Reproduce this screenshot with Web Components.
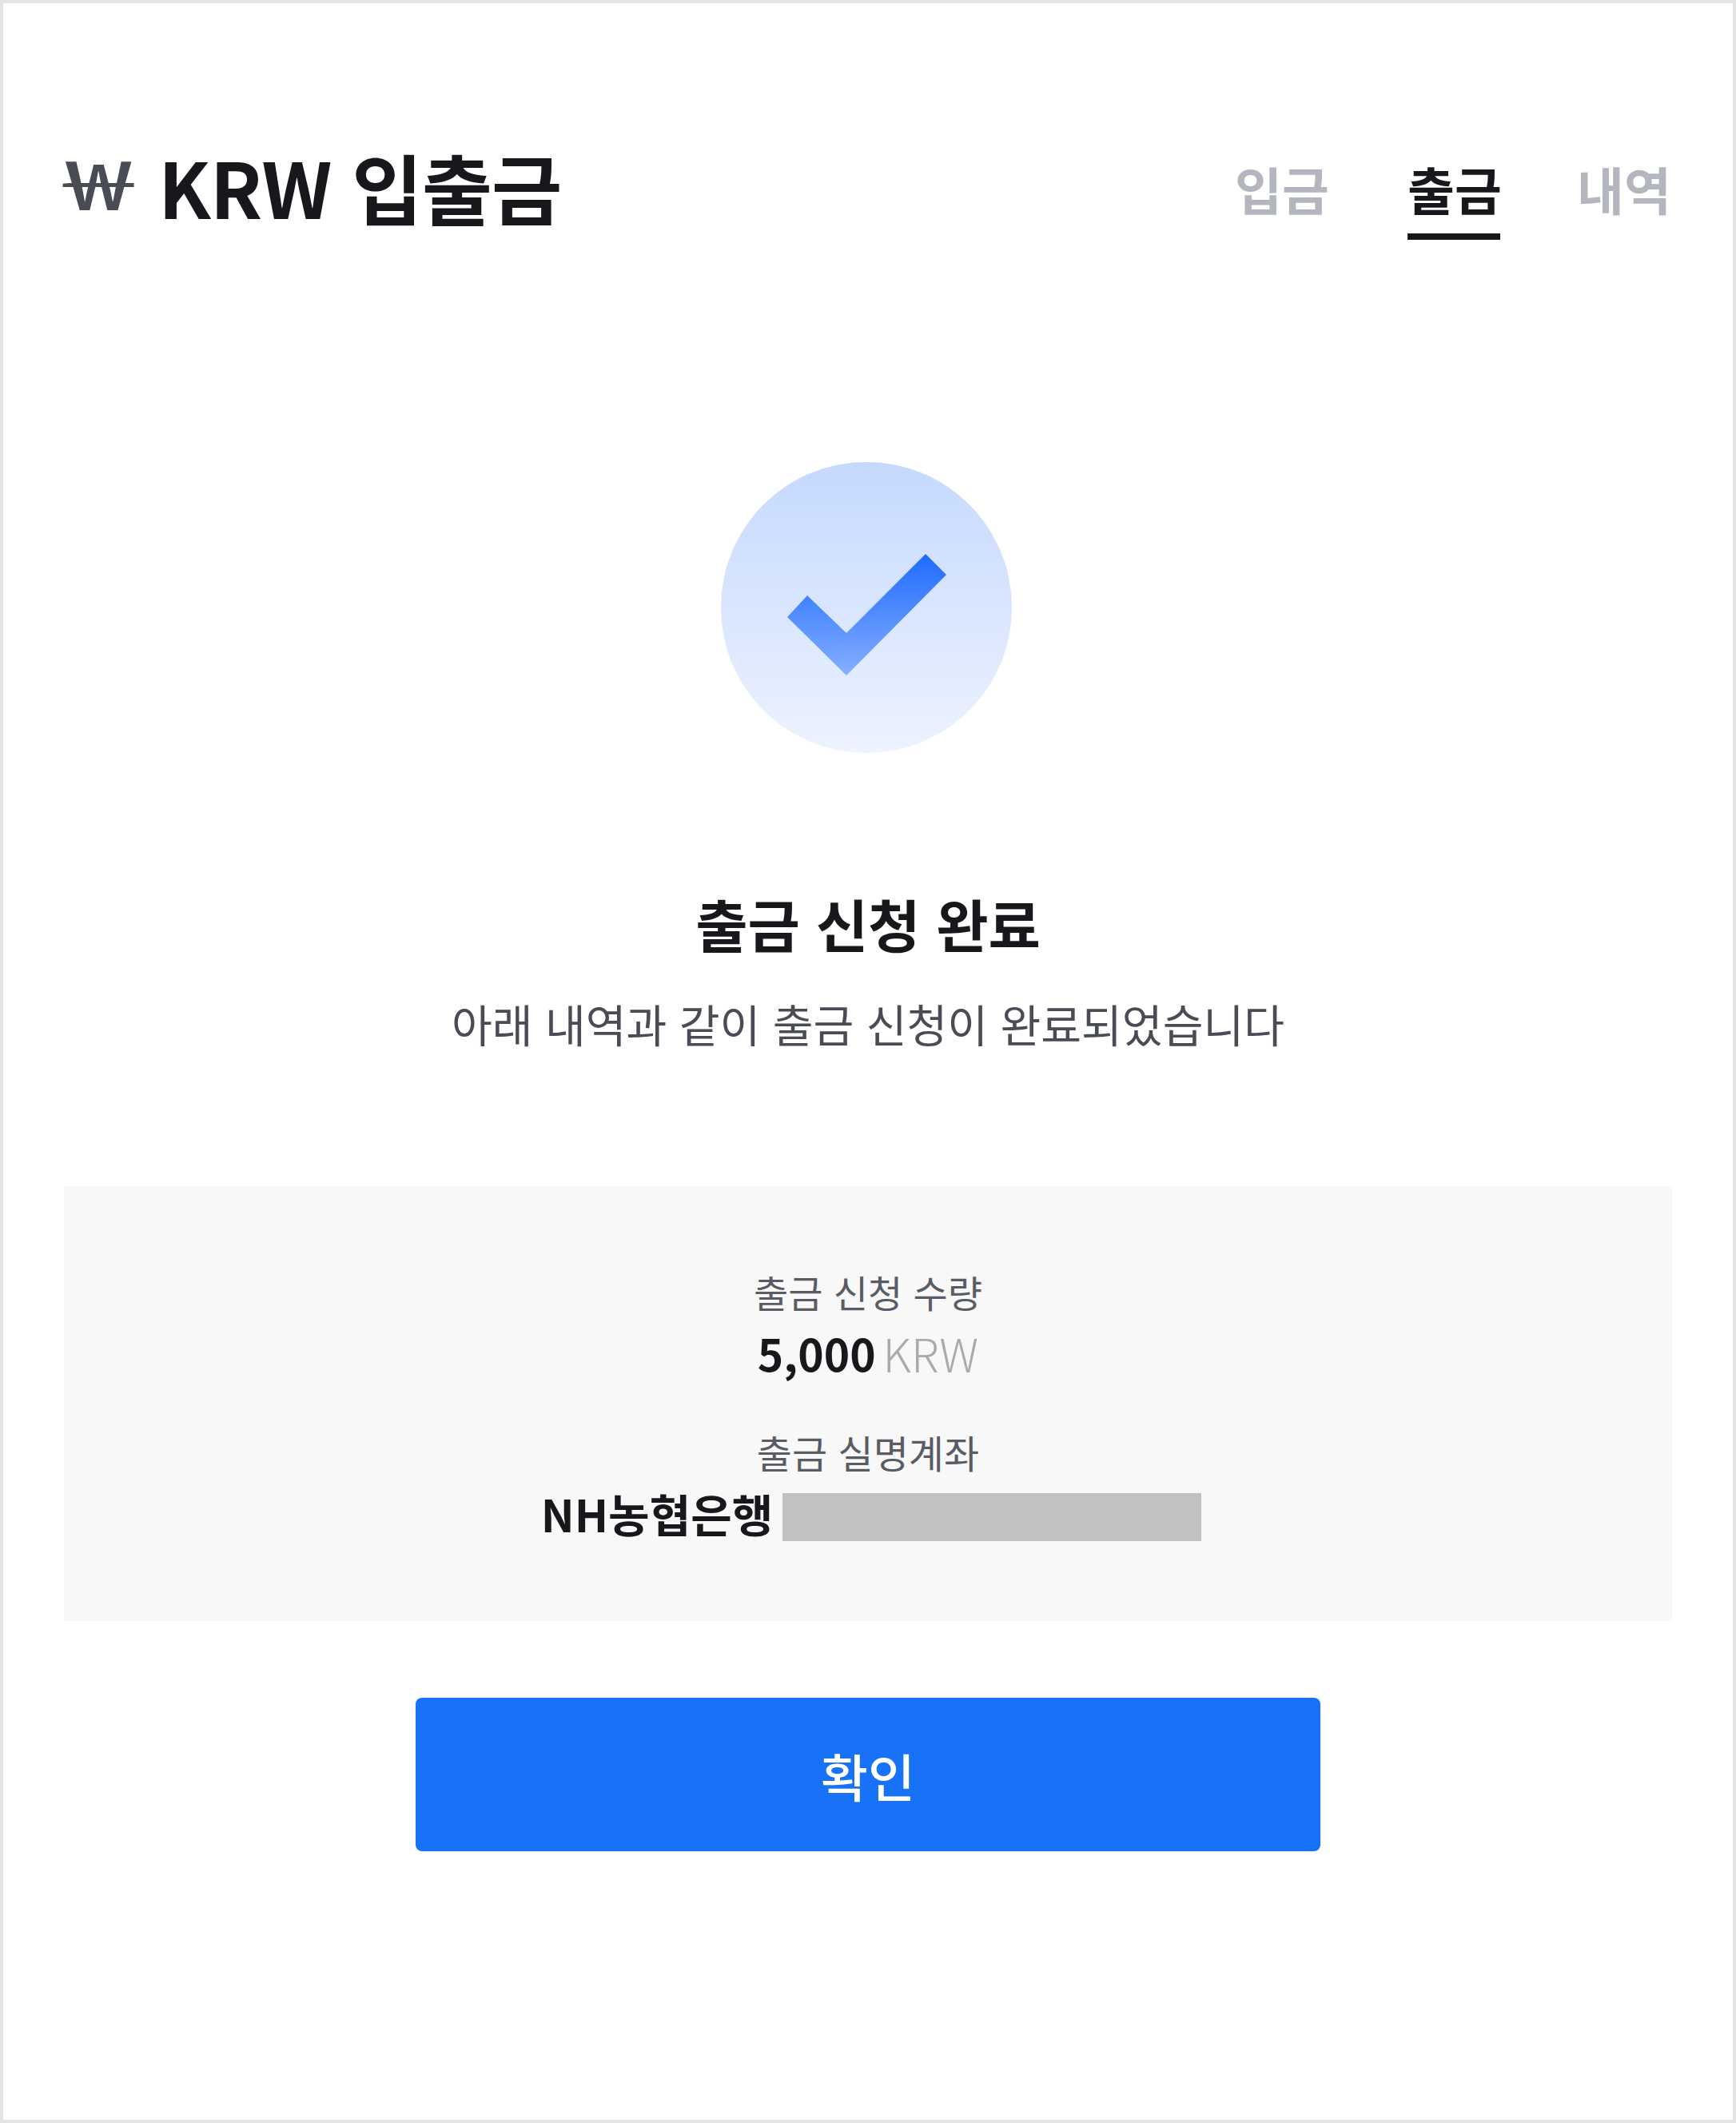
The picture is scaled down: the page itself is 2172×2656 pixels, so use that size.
<!DOCTYPE html>
<html lang="ko">
<head>
<meta charset="utf-8">
<title>KRW 입출금</title>
<style>
  html, body { margin: 0; padding: 0; background: #fff; }
  body { font-family: "Noto Sans CJK KR", "Noto Sans", sans-serif; }
</style>
</head>
<body>
<withdraw-page>
  <page-header slot="header">
    <span slot="icon">￦</span>
    KRW 입출금
    <tab-item slot="tabs" class="first">입금</tab-item>
    <tab-item slot="tabs" active>출금</tab-item>
    <tab-item slot="tabs">내역</tab-item>
  </page-header>
  <status-icon></status-icon>
  <status-text title-text="출금 신청 완료">아래 내역과 같이 출금 신청이 완료되었습니다</status-text>
  <info-panel>
    <info-item label="출금 신청 수량"><b>5,000</b><small>KRW</small></info-item>
    <info-item class="account" label="출금 실명계좌"><b>NH농협은행</b><masked-value></masked-value></info-item>
  </info-panel>
  <confirm-button>확인</confirm-button>
</withdraw-page>

<script>
class WithdrawPage extends HTMLElement {
    constructor() {
        super();
        this.attachShadow({mode: "open"}).innerHTML = `
        <style>
            :host {
                display: flex;
                flex-direction: column;
                box-sizing: border-box;
                width: 2172px;
                height: 2656px;
                padding: 0 76px;
                border: 4px solid #e4e4e4;
                background: #fff;
                color: #17181c;
                font-family: "Noto Sans CJK KR", "Noto Sans", sans-serif;
            }
        </style>
        <slot name="header"></slot>
        <slot></slot>
        `;
    }
}

class PageHeader extends HTMLElement {
    constructor() {
        super();
        this.attachShadow({mode: "open"}).innerHTML = `
        <style>
            :host {
                display: flex;
                justify-content: space-between;
                align-items: flex-start;
                height: 296px;
            }
            h1 {
                margin: 173px 0 0 -8px;
                font-size: 96px;
                font-weight: 700;
                line-height: 112px;
                letter-spacing: -1px;
                white-space: nowrap;
                display: flex;
                gap: 31px;
            }
            /* the sign is wider and shorter than the font's own */
            .won {
                color: #4a4c55;
                font-weight: 700;
                transform: scale(1.08, 0.84);
                transform-origin: 10% 22%;
            }
            nav {
                display: flex;
                gap: 96px;
                margin: 187px 3px 0 0;
            }
            ::slotted(.first) { margin-right: 4px; }
        </style>
        <h1><span class="won"><slot name="icon"></slot></span><span><slot></slot></span></h1>
        <nav><slot name="tabs"></slot></nav>
        `;
    }
}

class TabItem extends HTMLElement {
    constructor() {
        super();
        this.attachShadow({mode: "open"}).innerHTML = `
        <style>
            :host {
                display: block;
                box-sizing: border-box;
                height: 109px;
                width: 116px;
                font-size: 64px;
                font-weight: 700;
                line-height: 88px;
                text-align: center;
                white-space: nowrap;
                color: #b4b6bf;
                border-bottom: 8px solid transparent;
            }
            :host([active]) {
                color: #17181c;
                border-bottom-color: #17181c;
            }
        </style>
        <slot></slot>
        `;
    }
}

class StatusIcon extends HTMLElement {
    constructor() {
        super();
        this.attachShadow({mode: "open"}).innerHTML = `
        <style>
            :host { display: block; width: 364px; height: 364px; margin: 278px 0 0 822px; }
            svg { display: block; }
        </style>
        <svg width="364" height="364" viewBox="0 0 364 364">
            <defs>
                <linearGradient id="bg" x1="0" y1="0" x2="0" y2="1">
                    <stop offset="0" stop-color="#c5d9fe"/>
                    <stop offset="1" stop-color="#edf3ff"/>
                </linearGradient>
                <linearGradient id="mark" x1="0" y1="0" x2="0" y2="1">
                    <stop offset="0" stop-color="#1f6bfd"/>
                    <stop offset="1" stop-color="#85aeff"/>
                </linearGradient>
            </defs>
            <circle cx="182" cy="182" r="182" fill="url(#bg)"/>
            <path d="M83 194 L108 167 L157 214 L256 115 L282 141 L157 267 Z" fill="url(#mark)"/>
        </svg>
        `;
    }
}

class StatusText extends HTMLElement {
    constructor() {
        super();
        this.attachShadow({mode: "open"}).innerHTML = `
        <style>
            :host { display: block; text-align: center; margin-top: 160px; }
            h2 {
                margin: 0;
                font-size: 71px;
                font-weight: 700;
                line-height: 104px;
                color: #17181c;
            }
            p {
                margin: 30px 0 0;
                font-size: 55.2px;
                font-weight: 400;
                line-height: 88px;
                color: #4a4c55;
            }
        </style>
        <h2></h2>
        <p><slot></slot></p>
        `;
    }
    connectedCallback() {
        this.shadowRoot.querySelector("h2").textContent = this.getAttribute("title-text");
    }
}

class InfoPanel extends HTMLElement {
    constructor() {
        super();
        this.attachShadow({mode: "open"}).innerHTML = `
        <style>
            :host {
                display: flex;
                flex-direction: column;
                align-items: center;
                gap: 48px;
                box-sizing: border-box;
                height: 544px;
                margin-top: 160px;
                padding-top: 98px;
                background: #f8f8f8;
            }
        </style>
        <slot></slot>
        `;
    }
}

class InfoItem extends HTMLElement {
    constructor() {
        super();
        this.attachShadow({mode: "open"}).innerHTML = `
        <style>
            :host { display: block; text-align: center; }
            .label {
                font-size: 47px;
                line-height: 68px;
                color: #5a5c65;
            }
            :host(.account) .label { font-size: 48px; }
            .value {
                display: flex;
                justify-content: center;
                align-items: center;
                gap: 9px;
                font-size: 55px;
                line-height: 84px;
                height: 84px;
                white-space: nowrap;
            }
            :host(.account) .value { margin-top: 6px; padding-left: 8px; gap: 12px; font-size: 56px; }
            :host(.account) ::slotted(b) { margin-bottom: 10px; }
            ::slotted(b) { font-weight: 700; color: #17181c; }
            ::slotted(small) { font-size: 57px; font-weight: 300; color: #aaaaaa; }
        </style>
        <div class="label"></div>
        <div class="value"><slot></slot></div>
        `;
    }
    connectedCallback() {
        this.shadowRoot.querySelector(".label").textContent = this.getAttribute("label");
    }
}

class MaskedValue extends HTMLElement {
    constructor() {
        super();
        this.attachShadow({mode: "open"}).innerHTML = `
        <style>
            :host { display: block; width: 524px; height: 60px; background: #c1c1c1; }
        </style>
        `;
    }
}

class ConfirmButton extends HTMLElement {
    constructor() {
        super();
        this.attachShadow({mode: "open"}).innerHTML = `
        <style>
            :host { display: block; margin-top: 96px; }
            button {
                display: block;
                width: 1132px;
                height: 192px;
                margin: 0 0 0 440px;
                border: 0;
                border-radius: 8px;
                background: #1772f8;
                color: #fff;
                font-family: inherit;
                font-size: 64px;
                font-weight: 500;
            }
        </style>
        <button><slot></slot></button>
        `;
    }
}

customElements.define("withdraw-page", WithdrawPage);
customElements.define("page-header", PageHeader);
customElements.define("tab-item", TabItem);
customElements.define("status-icon", StatusIcon);
customElements.define("status-text", StatusText);
customElements.define("info-panel", InfoPanel);
customElements.define("info-item", InfoItem);
customElements.define("masked-value", MaskedValue);
customElements.define("confirm-button", ConfirmButton);
</script>
</body>
</html>
